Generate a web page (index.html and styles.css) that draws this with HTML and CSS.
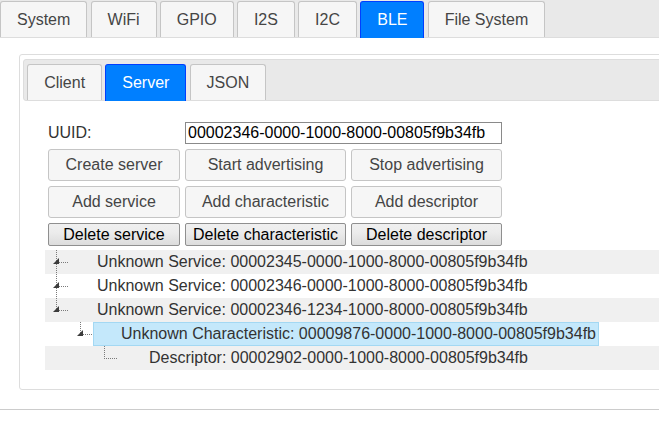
FILE: index.html
```html
<!DOCTYPE html>
<html lang="en">
    <head>
        <meta charset="UTF-8" />
        <meta name="viewport" content="width=device-width, initial-scale=1.0" />
        <title>ESP32 Console</title>

        <link rel="stylesheet" href="styles.css">
    </head>
    <body>
        <div class="page">
            <ul class="tabs-nav top">
                <li>System</li>
                <li>WiFi</li>
                <li>GPIO</li>
                <li>I2S</li>
                <li>I2C</li>
                <li class="active">BLE</li>
                <li>File System</li>
            </ul>
            <div class="main">
                <div class="tabs">
                    <ul class="tabs-nav inner">
                        <li>Client</li>
                        <li class="active">Server</li>
                        <li>JSON</li>
                    </ul>
                    <div class="tab-panel">
                        <div class="server-form">
                            <label class="field-label" for="uuid">UUID:</label>
                            <input class="uuid-input" id="uuid" type="text" value="00002346-0000-1000-8000-00805f9b34fb" />
                            <button class="ui-btn">Create server</button>
                            <button class="ui-btn">Start advertising</button>
                            <button class="ui-btn">Stop advertising</button>
                            <button class="ui-btn">Add service</button>
                            <button class="ui-btn">Add characteristic</button>
                            <button class="ui-btn">Add descriptor</button>
                            <button class="native-btn">Delete service</button>
                            <button class="native-btn">Delete characteristic</button>
                            <button class="native-btn">Delete descriptor</button>
                        </div>

                        <div class="tree">
                            <div class="node alt">
                                <svg class="branch" width="24" height="24" viewBox="0 0 24 24">
                                    <line class="dots" x1="11.5" y1="0" x2="11.5" y2="24" />
                                    <line class="dots" x1="14" y1="12.5" x2="24" y2="12.5" />
                                    <path class="arrow" d="M14 8 L14 14 L8 14 Z" />
                                </svg>
                                <span class="label">Unknown Service: 00002345-0000-1000-8000-00805f9b34fb</span>
                            </div>
                            <div class="node">
                                <svg class="branch" width="24" height="24" viewBox="0 0 24 24">
                                    <line class="dots" x1="11.5" y1="0" x2="11.5" y2="24" />
                                    <line class="dots" x1="14" y1="12.5" x2="24" y2="12.5" />
                                    <path class="arrow" d="M14 8 L14 14 L8 14 Z" />
                                </svg>
                                <span class="label">Unknown Service: 00002346-0000-1000-8000-00805f9b34fb</span>
                            </div>
                            <div class="node alt">
                                <svg class="branch" width="24" height="24" viewBox="0 0 24 24">
                                    <line class="dots" x1="11.5" y1="0" x2="11.5" y2="12" />
                                    <line class="dots" x1="14" y1="12.5" x2="24" y2="12.5" />
                                    <path class="arrow" d="M14 8 L14 14 L8 14 Z" />
                                </svg>
                                <span class="label">Unknown Service: 00002346-1234-1000-8000-00805f9b34fb</span>
                            </div>
                            <div class="node">
                                <span class="indent"></span>
                                <svg class="branch" width="24" height="24" viewBox="0 0 24 24">
                                    <line class="dots" x1="11.5" y1="0" x2="11.5" y2="12" />
                                    <line class="dots" x1="14" y1="12.5" x2="24" y2="12.5" />
                                    <path class="arrow" d="M14 8 L14 14 L8 14 Z" />
                                </svg>
                                <span class="label selected">Unknown Characteristic: 00009876-0000-1000-8000-00805f9b34fb</span>
                            </div>
                            <div class="node alt">
                                <span class="indent"></span>
                                <span class="indent"></span>
                                <svg class="branch" width="24" height="24" viewBox="0 0 24 24">
                                    <line class="dots" x1="11.5" y1="0" x2="11.5" y2="12" />
                                    <line class="dots" x1="11" y1="12.5" x2="24" y2="12.5" />
                                </svg>
                                <span class="label leaf">Descriptor: 00002902-0000-1000-8000-00805f9b34fb</span>
                            </div>
                        </div>
                    </div>
                </div>
            </div>
            <div class="footer-rule"></div>
        </div>
    </body>
</html>
```

FILE: styles.css
```css
* {
    box-sizing: border-box;
}
html,
body {
    margin: 0;
    overflow: hidden;
}
body {
    font-family: "Liberation Sans", Arial, sans-serif;
    font-size: 16px;
    color: #333;
    background: #fff;
}
.page {
    width: 760px;
}

/* tabs, jquery-ui look */
.tabs-nav {
    display: flex;
    margin: 0;
    padding: 1px 0 0;
    list-style: none;
    background: #e9e9e9;
    border-bottom: 1px solid #ddd;
}
.tabs-nav li {
    margin-right: 3.2px;
    padding: 8px 16px;
    line-height: 19px;
    border: 1px solid #c5c5c5;
    border-bottom: 0;
    border-radius: 3px 3px 0 0;
    background: #f6f6f6;
    color: #454545;
    white-space: nowrap;
}
.tabs-nav li.active {
    margin-bottom: -1px;
    padding-bottom: 9px;
    background: #007fff;
    border-color: #003eff;
    color: #fff;
}
.tabs-nav.inner {
    padding: 4px 3.2px 0;
    border: 1px solid #ddd;
    border-radius: 3px;
}
.main {
    padding: 16px 0 0 19px;
}
.tabs {
    padding: 4px 3px 3px;
    border: 1px solid #ddd;
    border-radius: 3px;
}
.tab-panel {
    padding: 16px 22px;
}

/* server form */
.server-form {
    display: grid;
    grid-template-columns: 132px 161px 151px;
    gap: 5px;
    align-items: center;
    margin: 5px 0 4px 3px;
}
.field-label {
    color: #333;
}
.uuid-input {
    grid-column: 2 / 4;
    height: 22px;
    padding: 1px 2px;
    border: 1px solid #8a8a8a;
    font: inherit;
    color: #000;
}
.ui-btn {
    height: 32px;
    padding: 0 8px;
    border: 1px solid #c5c5c5;
    border-radius: 3px;
    background: #f6f6f6;
    color: #454545;
    font: inherit;
    white-space: nowrap;
}
.native-btn {
    height: 23px;
    padding: 0 4px;
    border: 1px solid #8f8f8f;
    border-radius: 2px;
    background: linear-gradient(#f0f0f0, #ececec 40%, #dcdcdc);
    color: #000;
    font: inherit;
    white-space: nowrap;
}

/* tree */
.node {
    display: flex;
    align-items: center;
    height: 24px;
}
.node.alt {
    background: #f0f0f0;
}
.indent {
    flex: none;
    width: 24px;
}
.branch {
    flex: none;
    display: block;
}
.dots {
    stroke: #7a7a7a;
    stroke-width: 1;
    stroke-dasharray: 1 1;
    shape-rendering: crispEdges;
}
.arrow {
    fill: #3c3c3c;
}
.label {
    padding-left: 28px;
    white-space: nowrap;
}
.label.leaf {
    padding-left: 32px;
}
.label.selected {
    height: 24px;
    line-height: 22px;
    padding: 0 2px 0 27px;
    background: #c4e8fb;
    border: 1px solid #a3d8f3;
}

.footer-rule {
    margin-top: 19px;
    border-top: 1px solid #ccc;
}
```
